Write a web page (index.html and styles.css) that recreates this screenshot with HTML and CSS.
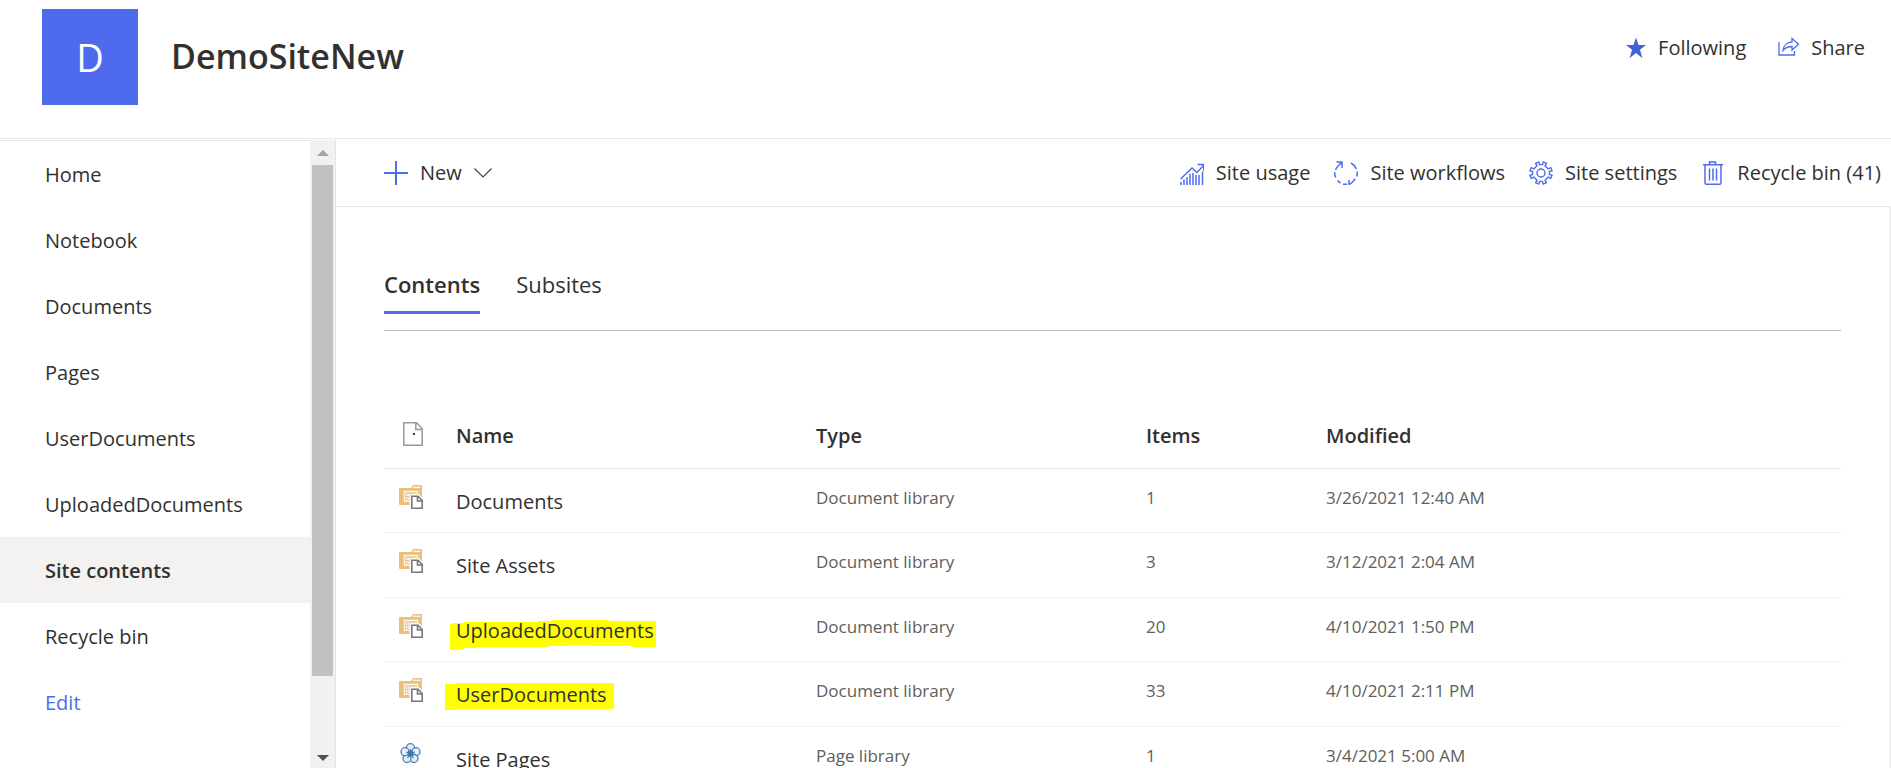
FILE: index.html
```html
<!DOCTYPE html>
<html lang="en">
<head>
<meta charset="utf-8">
<meta name="viewport" content="width=device-width, initial-scale=1">
<title>DemoSiteNew - Site contents</title>
<link rel="stylesheet" href="styles.css">
</head>
<body>
<svg class="sprite" aria-hidden="true">
  <symbol id="library" viewBox="0 0 24 24">
    <path fill="#eac07c" d="M1 3h11l2-3h9v20H1q-1 0-1-1V4q0-1 1-1z"/>
    <path stroke="#fff" stroke-width="1.200" d="M14 2.200h7.500"/>
    <path fill="none" stroke="#fdf6e8" stroke-width="1.400" d="M5.500 17V6.500h13V10M5 16.300h6"/>
    <path fill="#fdf6e8" d="M7 8.500h3v2.500H7zM11 8.500h6V11h-6zM7 12h3v2.500H7z"/>
    <path fill="#eac07c" d="M8 9.300h1v1H8zM12 9.300h4v1h-4zM8 12.800h1v1H8z"/>
    <path fill="#fff" d="M10.500 9.300H20l4 4V24H10.500z"/>
    <path fill="#fff" stroke="#777" stroke-width="1.600" d="M12.800 11.300h6.200l4.200 4.200v7.700H12.800zM18.500 11.500v4.500h4.500"/>
  </symbol>
</svg>
<header class="site-header">
  <a class="site-logo" href="#" aria-label="DemoSiteNew home">D</a>
  <h1 class="site-title">DemoSiteNew</h1>
  <div class="site-actions">
    <button class="action" type="button">
      <svg class="icon-sm" viewBox="0 0 22 22"><path fill="#4262d8" d="M11 .5l2.500 7.500H21l-6 4.700L17.300 21 11 16.100 4.700 21 7 12.700 1 8h7.500z"/></svg>
      Following
    </button>
    <button class="action" type="button">
      <svg class="icon-sm" viewBox="0 0 22 22"><path fill="none" stroke="#4f6bed" stroke-width="1.300" d="M1 5v13h15.500v-4M14 1.500l6.500 5.700L14 13V9.500c-4 0-6.500 1-9 4 .5-5 4-8.500 9-8.500z"/></svg>
      Share
    </button>
  </div>
</header>
<div class="body">
  <aside class="sidebar">
    <nav class="nav" aria-label="Site">
      <a class="nav-link" href="#">Home</a>
      <a class="nav-link" href="#">Notebook</a>
      <a class="nav-link" href="#">Documents</a>
      <a class="nav-link" href="#">Pages</a>
      <a class="nav-link" href="#">UserDocuments</a>
      <a class="nav-link" href="#">UploadedDocuments</a>
      <a class="nav-link nav-link-current" href="#" aria-current="page">Site contents</a>
      <a class="nav-link" href="#">Recycle bin</a>
      <a class="nav-link nav-link-edit" href="#">Edit</a>
    </nav>
    <div class="scrollbar" aria-hidden="true">
      <svg class="arrow" viewBox="0 0 12 6"><path fill="#a3a3a3" d="M6 0l6 6H0z"/></svg>
      <div class="track"><div class="thumb"></div></div>
      <svg class="arrow" viewBox="0 0 12 6"><path fill="#505050" d="M0 0h12L6 6z"/></svg>
    </div>
  </aside>
  <main class="main">
    <div class="toolbar">
      <button class="command command-new" type="button">
        <svg class="icon" viewBox="0 0 24 24"><path stroke="#4f6bed" stroke-width="2" d="M0 12h24M12 0v24"/></svg>
        New
        <svg class="chevron" viewBox="0 0 18 10"><path fill="none" stroke="#444" stroke-width="1.200" d="M.5.5L9 9 17.500.5"/></svg>
      </button>
      <button class="command" type="button">
        <svg class="icon" viewBox="0 0 24 24"><g fill="none" stroke="#4f6bed" stroke-width="1.500"><path d="M.5 18L12 7l5 4.500 6.500-7M17.500 3.500h6.300V10"/><path d="M1 24v-3M4 24v-5.500M7 24v-8M10 24V13M13 24V12M16 24V14M19 24V14M22.500 24V10.500"/></g></svg>
        Site usage
      </button>
      <button class="command" type="button">
        <svg class="icon" viewBox="0 0 24 24"><g fill="none" stroke="#4f6bed" stroke-width="1.500"><path d="M2.500 1H8v6M8 1L4.500 4.500A10.800 10.800 0 0 0 1.500 9M.7 11a11.300 11.300 0 0 0 1 5.500M3.500 19.500a11.300 11.300 0 0 0 3 2.500M9 23.200h4M15 19v4.500l3-2 3.200-3.800M22.700 15.500a11 11 0 0 0 .6-5M22.300 8A11 11 0 0 0 17 2"/></g></svg>
        Site workflows
      </button>
      <button class="command" type="button">
        <svg class="icon" viewBox="0 0 24 24"><g fill="none" stroke="#4f6bed" stroke-width="1.400" stroke-linejoin="round"><circle cx="12" cy="12" r="4"/><path d="M10.500 3.600L9.900.9 6.500 2.300 8 4.700 4.700 8 2.300 6.500.9 9.900l2.700.6v3l-2.700.6 1.400 3.400L4.700 16 8 19.300l-1.500 2.400 3.400 1.400.6-2.700h3l.6 2.700 3.400-1.400-1.500-2.400 3.300-3.300 2.400 1.500 1.400-3.400-2.700-.6v-3l2.700-.6-1.400-3.400L19.300 8 16 4.700l1.500-2.400L14.100.9l-.6 2.700z"/></g></svg>
        Site settings
      </button>
      <button class="command" type="button">
        <svg class="icon" viewBox="0 0 24 24"><path fill="none" stroke="#4f6bed" stroke-width="1.500" d="M2 3.700h20M8.500 3.500V1h6v2.500M4 4v18q0 1.200 1.200 1.200h13.600q1.200 0 1.200-1.200V4M8.500 7.500v12M12 7.500v12M15.500 7.500v12"/></svg>
        Recycle bin (41)
      </button>
    </div>
    <div class="content">
      <div class="tabs" role="tablist">
        <button class="tab tab-active" type="button" role="tab" aria-selected="true">Contents</button>
        <button class="tab" type="button" role="tab" aria-selected="false">Subsites</button>
      </div>
      <table class="list">
        <colgroup><col class="col-icon"><col class="col-name"><col class="col-type"><col class="col-items"><col></colgroup>
        <thead>
          <tr>
            <th scope="col" aria-label="File type"><svg class="icon" viewBox="0 0 24 24"><path fill="none" stroke="#999" stroke-width="1.500" d="M4.800.8h12.700l5.700 6v16.400H4.800zM16.800 1v6.500H23"/><path fill="#333" d="M14 11h2v2h-2z"/></svg></th>
            <th scope="col">Name</th><th scope="col">Type</th><th scope="col">Items</th><th scope="col">Modified</th>
          </tr>
        </thead>
        <tbody>
          <tr>
            <td><svg class="icon"><use href="#library"/></svg></td>
            <td><a class="item" href="#">Documents</a></td><td>Document library</td><td>1</td><td>3/26/2021 12:40 AM</td>
          </tr>
          <tr>
            <td><svg class="icon"><use href="#library"/></svg></td>
            <td><a class="item" href="#">Site Assets</a></td><td>Document library</td><td>3</td><td>3/12/2021 2:04 AM</td>
          </tr>
          <tr>
            <td><svg class="icon"><use href="#library"/></svg></td>
            <td><a class="item" href="#"><svg class="marker marker-uploaded" viewBox="0 0 206 30" preserveAspectRatio="none"><path fill="#ff0" d="M0 4h3V3h11V2h74V1h14V0h57v1h47v26h-24v-1h-40v-1h-24v1H98v1H26v1H14v1H9v1H0z"/></svg>UploadedDocuments</a></td><td>Document library</td><td>20</td><td>4/10/2021 1:50 PM</td>
          </tr>
          <tr>
            <td><svg class="icon"><use href="#library"/></svg></td>
            <td><a class="item" href="#"><svg class="marker marker-user" viewBox="0 0 169 27" preserveAspectRatio="none"><path fill="#ff0" d="M0 1h11V0h158v26H11v1H0z"/></svg>UserDocuments</a></td><td>Document library</td><td>33</td><td>4/10/2021 2:11 PM</td>
          </tr>
          <tr>
            <td><svg class="icon" viewBox="0 0 24 24"><g fill="#e4eff8" stroke="#4c7fb2" stroke-width="1.300"><circle cx="11.500" cy="4.700" r="4"/><circle cx="17" cy="8.700" r="4"/><circle cx="15" cy="15.500" r="4"/><circle cx="8" cy="15.500" r="4"/><circle cx="6" cy="8.700" r="4"/></g><path fill="none" stroke="#4c7fb2" stroke-width="1.300" d="M11.500 10.500V6M11.500 10.500l4.500-1.500M11.500 10.500l3 4.500M11.500 10.500l-3 4.500M11.500 10.500L7 9"/><circle cx="11.500" cy="10.500" r="3" fill="#3f78b0"/></svg></td>
            <td><a class="item" href="#">Site Pages</a></td><td>Page library</td><td>1</td><td>3/4/2021 5:00 AM</td>
          </tr>
        </tbody>
      </table>
    </div>
  </main>
</div>
</body>
</html>
```
FILE: styles.css
```css
* { box-sizing: border-box; }

body {
  margin: 0;
  height: 100vh;
  display: flex;
  flex-direction: column;
  overflow: hidden;
  background: #fff;
  color: #323130;
  font: 20px/28px "Segoe UI", "Open Sans", "Noto Sans", sans-serif;
}

a { color: inherit; text-decoration: none; }

button {
  padding: 0;
  border: 0;
  background: none;
  color: inherit;
  font: inherit;
  cursor: pointer;
}

svg { display: block; flex: none; }
.sprite { position: absolute; width: 0; height: 0; }
.icon { width: 24px; height: 24px; }
.icon-sm { width: 22px; height: 22px; }

/* Header */
.site-header {
  display: flex;
  flex: none;
  align-items: flex-start;
  padding: 9px 26px 33px 42px;
  border-bottom: 1px solid #eaeaea;
}

.site-logo {
  display: flex;
  align-items: center;
  justify-content: center;
  width: 96px;
  height: 96px;
  background: #4f6bed;
  color: #fff;
  font-size: 38px;
}

.site-title {
  margin: 24px auto 0 33px;
  font-size: 34px;
  line-height: 46px;
  font-weight: 600;
}

.site-actions { display: flex; gap: 32px; padding-top: 25px; }
.action { display: flex; align-items: center; gap: 11px; }

/* Sidebar */
.body { display: flex; flex: 1; min-height: 0; }

.sidebar {
  display: flex;
  flex: none;
  width: 336px;
  padding-top: 1px;
  border-right: 1px solid #e4e4e4;
}

.nav {
  flex: 1;
  overflow: hidden;
  border-top: 1px solid #eaeaea;
}

.nav-link {
  display: block;
  padding: 20px 45px 18px;
}

.nav-link-current { background: #f3f2f1; font-weight: 600; }
.nav-link-edit { color: #4f6bed; }

.scrollbar {
  display: flex;
  flex-direction: column;
  gap: 9px;
  width: 25px;
  padding: 10px 2px 7px;
  background: #f1f1f1;
}

.arrow { width: 12px; height: 6px; margin: 0 auto; }
.track { flex: 1; }
.thumb { width: 21px; height: 88%; background: #c1c1c1; }

/* Toolbar */
.main {
  display: flex;
  flex: 1;
  flex-direction: column;
  min-width: 0;
}

.toolbar {
  display: flex;
  flex: none;
  align-items: center;
  gap: 24px;
  height: 68px;
  padding: 0 10px 0 48px;
  border-bottom: 1px solid #eaeaea;
}

.command { display: flex; align-items: center; gap: 12px; white-space: nowrap; }
.command-new { margin-right: auto; }
.chevron { width: 18px; height: 10px; }

/* Contents */
.content {
  flex: 1;
  min-height: 0;
  overflow: hidden;
  padding: 61px 48px 0;
  border-right: 2px solid #f0f0f0;
}

.tabs {
  display: flex;
  gap: 36px;
  padding-bottom: 16px;
  border-bottom: 1px solid #bdbdbd;
}

.tab {
  padding: 0 0 11px;
  border-bottom: 3px solid transparent;
  font-size: 22px;
  line-height: 32px;
}

.tab-active { border-color: #4f6bed; font-weight: 600; }

.list {
  width: 100%;
  margin-top: 74px;
  border-collapse: separate;
  border-spacing: 0;
  table-layout: fixed;
}

.col-icon { width: 72px; }
.col-name { width: 360px; }
.col-type { width: 330px; }
.col-items { width: 180px; }

.list th, .list td {
  height: 64px;
  padding: 0;
  border-bottom: 1px solid #f1f1f1;
  text-align: left;
  vertical-align: top;
}

.list th { padding-top: 17px; border-color: #e6e6e6; font-weight: 600; }
.list td { padding-top: 15px; color: #605e5c; font-size: 17px; }
.list tr:nth-child(even) td { height: 65px; }
.list td:first-child { padding: 16px 0 0 15px; }
.list th:first-child { padding: 17px 0 0 15px; }
.list td:nth-child(2) { padding-top: 19px; }

.item {
  position: relative;
  z-index: 0;
  color: #323130;
  font-size: 20px;
}

.marker { position: absolute; z-index: -1; }
.marker-uploaded { left: -6px; top: 3px; width: 206px; height: 30px; }
.marker-user { left: -11px; top: 2px; width: 169px; height: 27px; }
```
